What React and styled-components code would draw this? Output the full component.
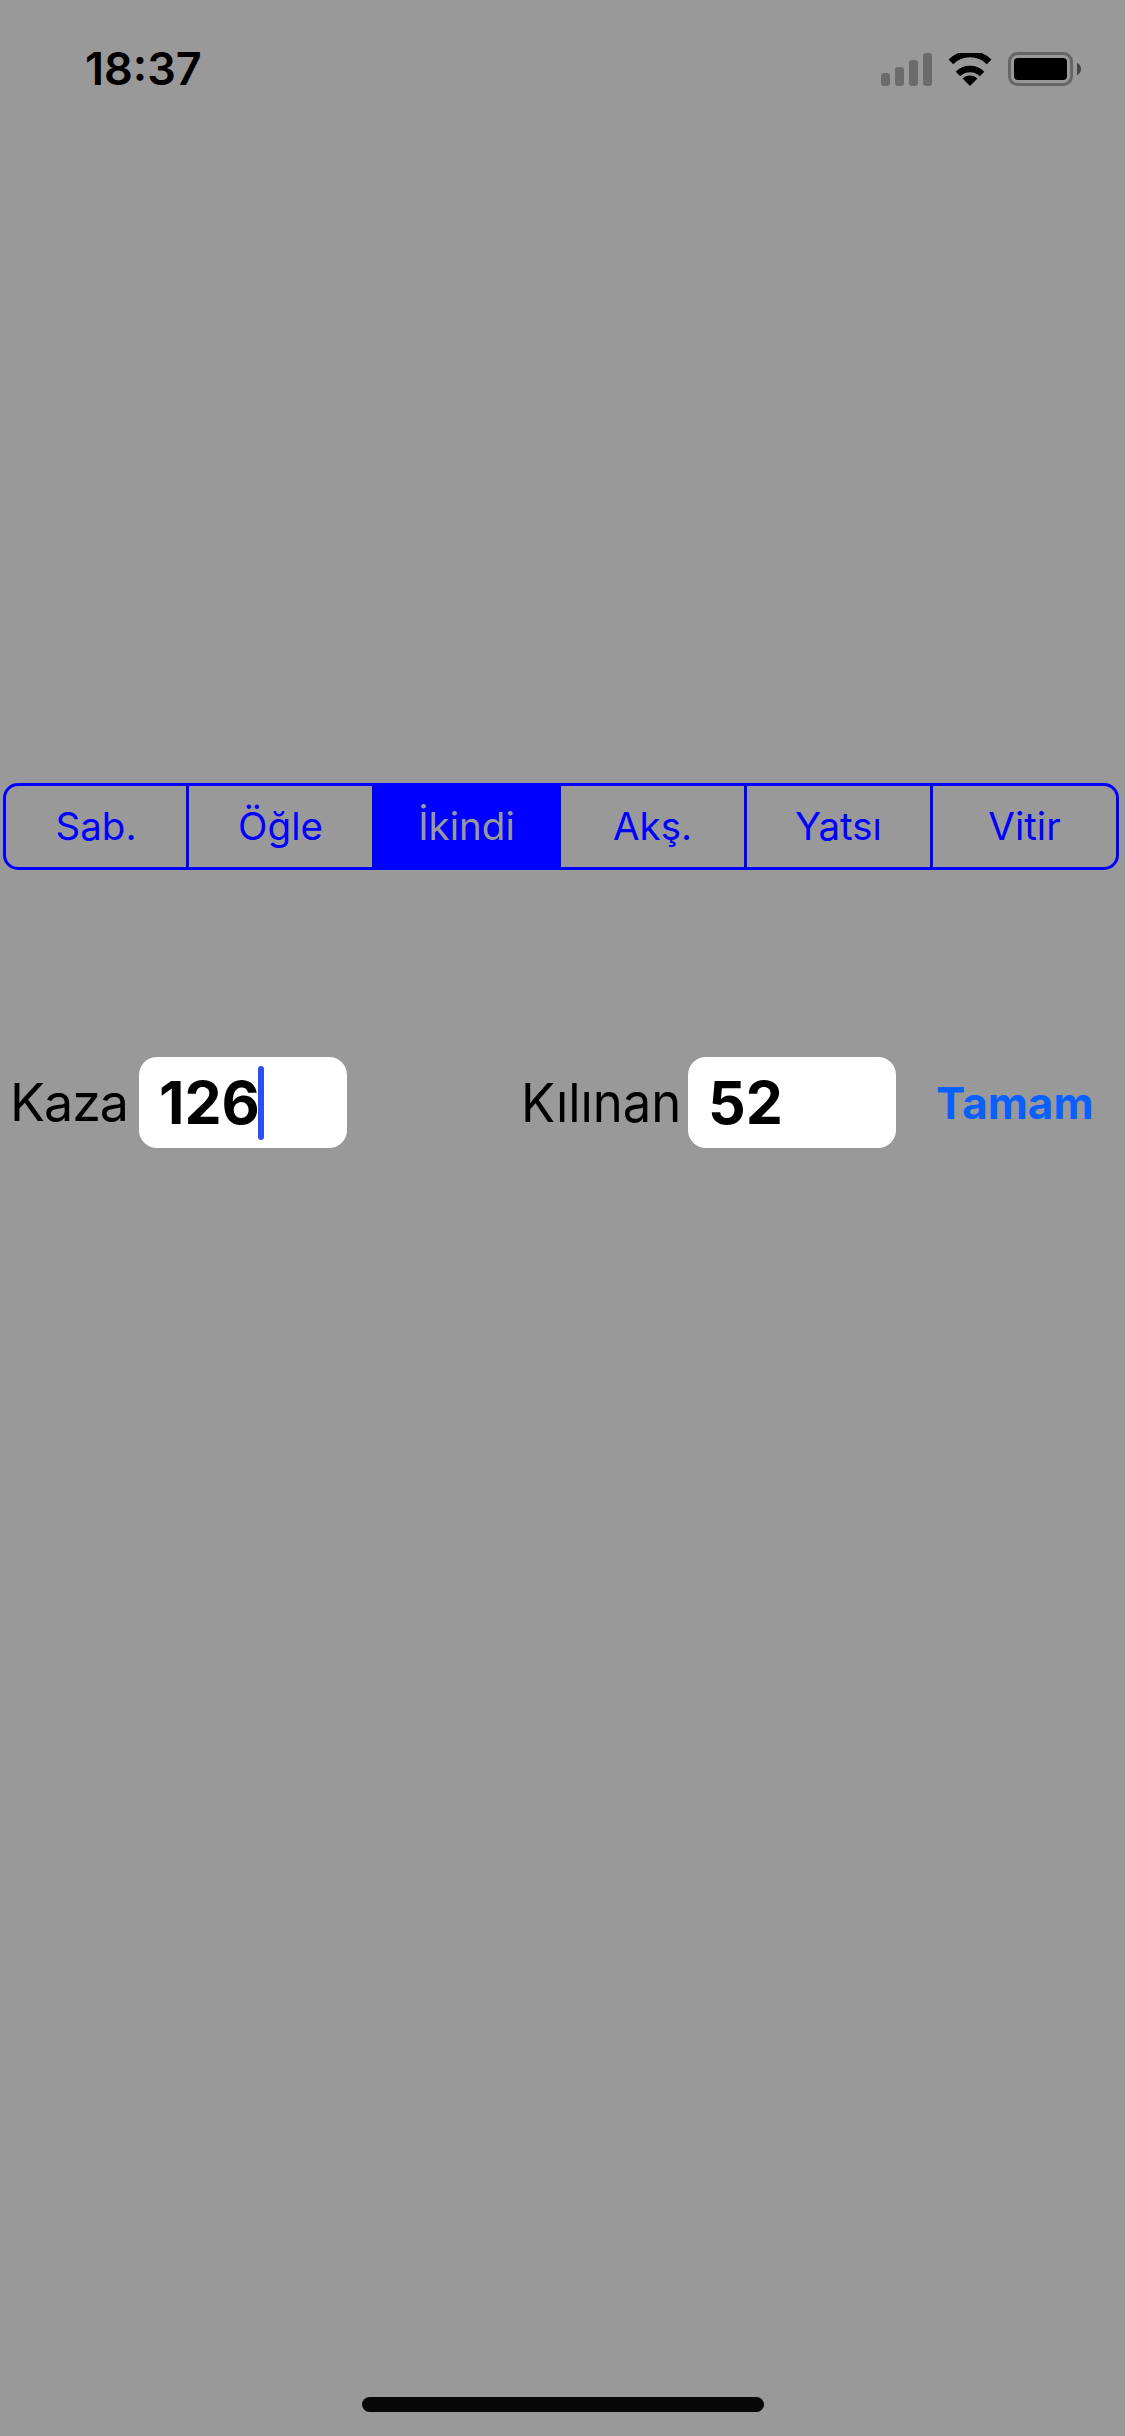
import React from "react";
import styled, { createGlobalStyle } from "styled-components";

const GlobalStyle = createGlobalStyle`
  html, body {
    margin: 0;
    padding: 0;
    background: #999999;
  }
  * {
    box-sizing: border-box;
  }
`;

const Page = styled.div`
  display: flex;
  flex-direction: column;
  width: 1125px;
  height: 2436px;
  background: #999999;
  font-family: Inter, "Noto Sans", sans-serif;
  color: #000;
`;

const StatusBar = styled.div`
  display: flex;
  justify-content: space-between;
  align-items: center;
  height: 52px;
  margin-top: 43px;
  padding: 0 44px 0 85px;
`;

const Clock = styled.span`
  font-size: 45px;
  font-weight: 600;
  line-height: 52px;
`;

const StatusIcons = styled.div`
  display: flex;
  align-items: center;
  gap: 15px;
`;

const Segments = styled.div`
  display: grid;
  grid-template-columns: 183px 186px 186px 186px 186px 183px;
  width: 1116px;
  height: 87px;
  margin: 688px 0 0 3px;
  border: 3px solid #0000ff;
  border-radius: 15px;
  overflow: hidden;
`;

const Segment = styled.div`
  display: flex;
  justify-content: center;
  align-items: center;
  padding-bottom: 1px;
  font-size: 38.5px;
  color: ${(p) => (p.$active ? "#999999" : "#0000ff")};
  background: ${(p) => (p.$active ? "#0000ff" : "transparent")};
  border-right: ${(p) => (p.$last ? "0" : "3px solid #0000ff")};
`;

const FormRow = styled.div`
  display: flex;
  align-items: center;
  height: 91px;
  margin-top: 187px;
  padding-left: 10px;
`;

const Label = styled.span`
  flex: none;
  width: ${(p) => p.$width}px;
  font-size: ${(p) => p.$size}px;
  letter-spacing: ${(p) => p.$tracking || 0}px;
  line-height: 91px;
  white-space: nowrap;
  transform-origin: left center;
  transform: scaleX(${(p) => p.$squeeze || 1});
`;

const Field = styled.div`
  display: flex;
  align-items: center;
  flex: none;
  width: 208px;
  height: 91px;
  padding-left: 20px;
  background: #fff;
  border-radius: 18px;
  margin-right: ${(p) => p.$gap || 0}px;
`;

const Value = styled.span`
  font-size: 59px;
  font-weight: 700;
  line-height: 91px;
`;

const Caret = styled.span`
  flex: none;
  width: 6px;
  height: 74px;
  margin-left: -2px;
  background: #2f4df5;
  border-radius: 3px;
`;

const DoneButton = styled.button`
  flex: none;
  margin: 0 0 0 40px;
  padding: 0;
  border: 0;
  background: none;
  font-family: inherit;
  font-size: 44px;
  font-weight: 700;
  color: #0a60ff;
`;

const HomeBar = styled.div`
  width: 402px;
  height: 15px;
  margin: auto 0 24px 362px;
  background: #080808;
  border-radius: 8px;
`;

const SignalIcon = () => (
  <svg width="51" height="33" viewBox="0 0 51 33" fill="#6b6b6b">
    <rect x="0" y="20" width="9" height="13" rx="3" />
    <rect x="14" y="14" width="9" height="19" rx="3" />
    <rect x="28" y="7" width="9" height="26" rx="3" />
    <rect x="42" y="0" width="9" height="33" rx="3" />
  </svg>
);

const WifiIcon = () => (
  <svg width="46" height="33" viewBox="0 0 46 33" fill="none" stroke="#000">
    <path d="M3.9 8.9 A27 27 0 0 1 42.1 8.9" strokeWidth="6.5" />
    <path d="M11 21 A17 17 0 0 1 35 21" strokeWidth="6.5" />
    <path d="M23 33 L15.5 25.5 A10.6 10.6 0 0 1 30.5 25.5 Z" fill="#000" stroke="none" />
  </svg>
);

const BatteryIcon = () => (
  <svg width="73" height="34" viewBox="0 0 73 34">
    <rect x="1.5" y="1.5" width="62" height="31" rx="8" fill="none" stroke="#666666" strokeWidth="3" />
    <rect x="6" y="6" width="53" height="22" rx="4" fill="#000" />
    <path d="M69 11 C71.5 12 73 14 73 17 C73 20 71.5 22 69 23 Z" fill="#444444" />
  </svg>
);

const prayers = ["Sab.", "Öğle", "İkindi", "Akş.", "Yatsı", "Vitir"];

const App = () => {
  return (
    <Page>
      <GlobalStyle />
      <StatusBar>
        <Clock>18:37</Clock>
        <StatusIcons>
          <SignalIcon />
          <WifiIcon />
          <BatteryIcon />
        </StatusIcons>
      </StatusBar>
      <Segments>
        {prayers.map((name, i) => (
          <Segment key={name} $active={i === 2} $last={i === prayers.length - 1}>
            {name}
          </Segment>
        ))}
      </Segments>
      <FormRow>
        <Label $width={129} $size={52} $tracking={-1}>
          Kaza
        </Label>
        <Field $gap={174}>
          <Value>126</Value>
          <Caret />
        </Field>
        <Label $width={167} $size={54} $squeeze={0.94}>
          Kılınan
        </Label>
        <Field>
          <Value>52</Value>
        </Field>
        <DoneButton>Tamam</DoneButton>
      </FormRow>
      <HomeBar />
    </Page>
  );
};

export default App;
